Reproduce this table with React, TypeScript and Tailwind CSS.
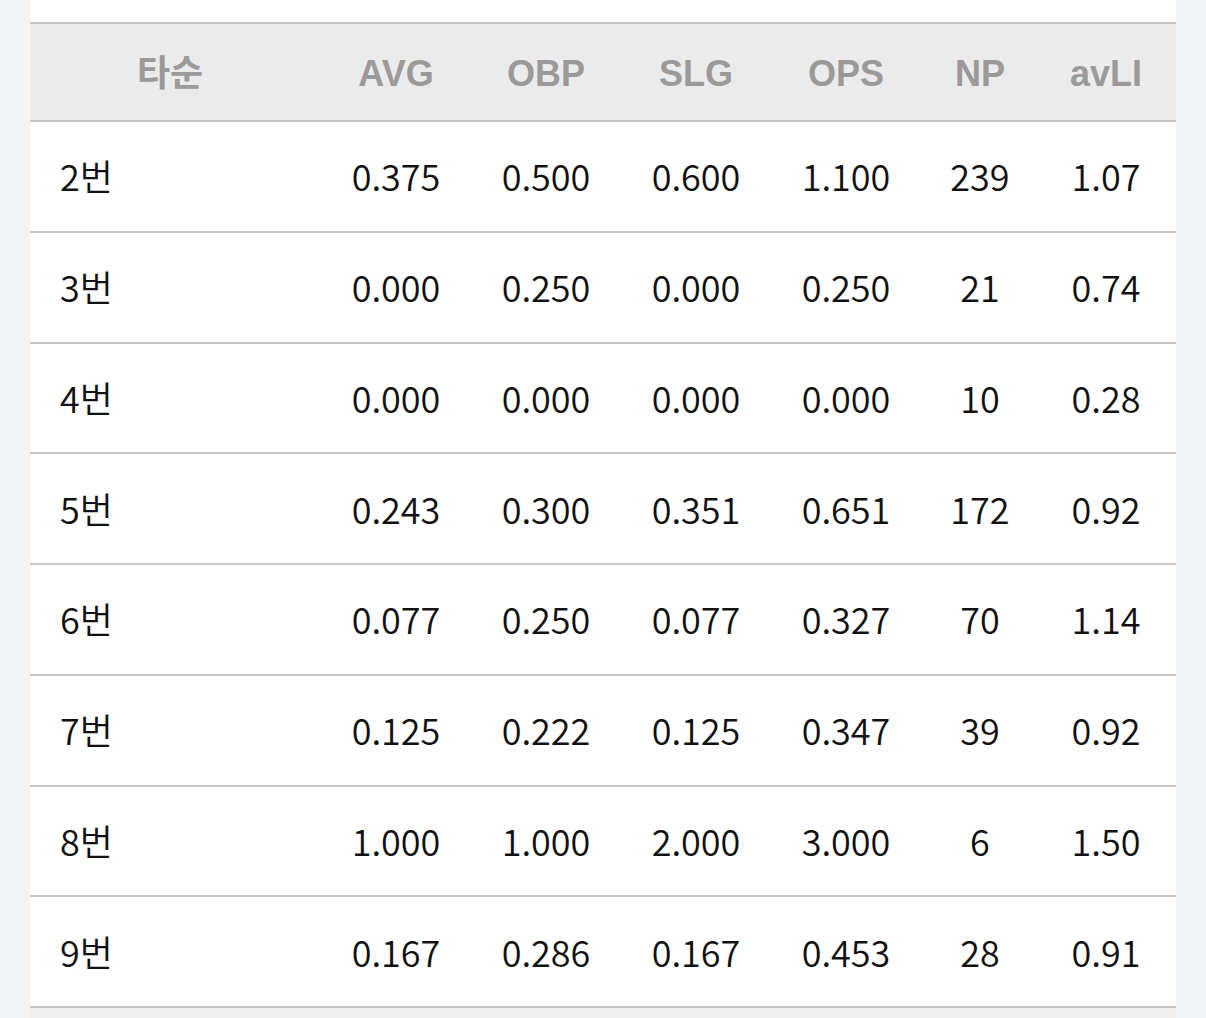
const HEAD = ['AVG', 'OBP', 'SLG', 'OPS', 'NP', 'avLI'];

const ROWS: { order: string; vals: string[] }[] = [
  { order: '2번', vals: ['0.375', '0.500', '0.600', '1.100', '239', '1.07'] },
  { order: '3번', vals: ['0.000', '0.250', '0.000', '0.250', '21', '0.74'] },
  { order: '4번', vals: ['0.000', '0.000', '0.000', '0.000', '10', '0.28'] },
  { order: '5번', vals: ['0.243', '0.300', '0.351', '0.651', '172', '0.92'] },
  { order: '6번', vals: ['0.077', '0.250', '0.077', '0.327', '70', '1.14'] },
  { order: '7번', vals: ['0.125', '0.222', '0.125', '0.347', '39', '0.92'] },
  { order: '8번', vals: ['1.000', '1.000', '2.000', '3.000', '6', '1.50'] },
  { order: '9번', vals: ['0.167', '0.286', '0.167', '0.453', '28', '0.91'] },
];

const GRID = 'grid grid-cols-[291px_150px_150px_150px_150px_118px_134px_1fr]';

export default function App() {
  return (
    <div
      className="flex min-h-[1018px] w-[1206px] bg-[#f3f4f6]"
      style={{ fontFamily: '"Noto Sans CJK KR", "Noto Sans", sans-serif' }}
    >
      <div className="ml-[30px] w-[1146px] bg-white pt-[22px]">
        <div
          className={`${GRID} h-[100px] items-center border-y-2 border-[#c8c8c8] bg-[#ebebeb] pt-[4px] text-[36px] font-bold text-[#9a9a9a]`}
          style={{ fontFamily: '"Liberation Sans", "Noto Sans CJK KR", sans-serif' }}
        >
          <div className="pr-[11px] text-center">타순</div>
          {HEAD.map((h) => (
            <div key={h} className="text-center">
              {h}
            </div>
          ))}
          <div />
        </div>
        {ROWS.map((r) => (
          <div
            key={r.order}
            className={`${GRID} h-[110.75px] items-center border-b-2 border-[#c8c8c8] pb-[2px] text-[36px] font-[350] text-[#111]`}
          >
            <div className="pl-[30px]">{r.order}</div>
            {r.vals.map((v, i) => (
              <div key={i} className="text-center">
                {v}
              </div>
            ))}
            <div />
          </div>
        ))}
        <div className="h-[10px] bg-[#efefef]" />
      </div>
    </div>
  );
}
